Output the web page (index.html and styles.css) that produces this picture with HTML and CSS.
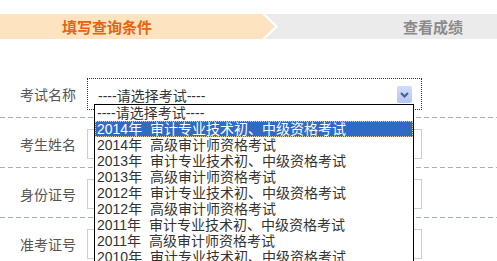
FILE: index.html
```html
<!DOCTYPE html>
<html lang="zh-CN">
<head>
    <meta charset="UTF-8">
    <title>成绩查询</title>
    <link rel="stylesheet" href="styles.css">
</head>
<body>
    <div class="steps">
        <div class="step-on"><span>填写查询条件</span></div>
        <div class="step-next">查看成绩</div>
    </div>

    <div class="query-form">
        <div class="row">
            <label>考试名称</label>
            <div class="select">
                <span>----请选择考试----</span>
                <i class="select-btn">
                    <svg width="15" height="17" viewBox="0 0 15 17">
                        <path d="M4 7 L7.5 10.5 L11 7" fill="none" stroke="#4a5e86" stroke-width="2"/>
                    </svg>
                </i>
                <ul class="options">
                    <li>----请选择考试----</li>
                    <li class="active">2014年  审计专业技术初、中级资格考试</li>
                    <li>2014年  高级审计师资格考试</li>
                    <li>2013年  审计专业技术初、中级资格考试</li>
                    <li>2013年  高级审计师资格考试</li>
                    <li>2012年  审计专业技术初、中级资格考试</li>
                    <li>2012年  高级审计师资格考试</li>
                    <li>2011年  审计专业技术初、中级资格考试</li>
                    <li>2011年  高级审计师资格考试</li>
                    <li>2010年  审计专业技术初、中级资格考试</li>
                </ul>
            </div>
        </div>
        <div class="row">
            <label>考生姓名</label>
            <input type="text" class="field">
        </div>
        <div class="row">
            <label>身份证号</label>
            <input type="text" class="field">
        </div>
        <div class="row">
            <label>准考证号</label>
            <input type="text" class="field">
        </div>
    </div>
</body>
</html>
```

FILE: styles.css
```css
html {
    overflow: hidden;
}
body {
    margin: 0;
    font-family: "Liberation Sans", "Noto Sans CJK SC", sans-serif;
    font-size: 14px;
    background: #fff;
}
.steps {
    display: flex;
    height: 25px;
    margin-top: 14px;
    background: #ebebeb;
    font-family: "Noto Sans CJK SC", sans-serif;
    font-weight: bold;
    font-size: 15px;
    line-height: 25px;
}
.step-on {
    flex: none;
    width: 278px;
    background: #fff;
    clip-path: polygon(0 0, 265px 0, 278px 50%, 265px 100%, 0 100%);
}
.step-on span {
    display: block;
    height: 100%;
    padding-left: 62px;
    background: #fde3bf;
    color: #e4650e;
    clip-path: polygon(0 0, 262px 0, 275px 50%, 262px 100%, 0 100%);
}
.step-next {
    flex: 1;
    padding-left: 125px;
    color: #8a8a8a;
}
.query-form {
    margin-top: 29px;
}
.row {
    display: flex;
    align-items: center;
    padding: 11px 0 9px;
    background-image: repeating-linear-gradient(to right, #a3b4b4 0 5px, transparent 5px 8px);
    background-size: 100% 1px;
    background-position: left bottom;
    background-repeat: no-repeat;
}
.row label {
    flex: none;
    box-sizing: border-box;
    width: 87px;
    padding-left: 20px;
    color: #555;
    font-family: "Noto Sans CJK SC", sans-serif;
    font-size: 14px;
}
.field {
    box-sizing: border-box;
    width: 335px;
    height: 30px;
    margin: 0;
    border: 1px solid #cfcfcf;
    background: #fff;
}
.select {
    position: relative;
    box-sizing: border-box;
    display: flex;
    align-items: center;
    justify-content: space-between;
    width: 335px;
    height: 32px;
    margin: -1px 0;
    padding: 2px 9px 0 10px;
    border: 1px dotted #333;
    color: #333;
}
.select-btn {
    display: block;
    width: 15px;
    height: 17px;
    margin-top: -2px;
    border-radius: 2px;
    background: linear-gradient(#cfdcfc, #b3c7f5);
}
.select-btn svg {
    display: block;
}
.options {
    position: absolute;
    top: 25px;
    left: 6px;
    width: 318px;
    margin: 0;
    padding: 0;
    list-style: none;
    border: 1px solid #000;
    background: #fff;
}
.options li {
    height: 16px;
    padding-left: 2px;
    line-height: 16px;
    white-space: pre;
    color: #333;
}
.options li.active {
    background: #316ac5;
    color: #fff;
    outline: 1px dotted #d8d0a0;
    outline-offset: -1px;
}
```
